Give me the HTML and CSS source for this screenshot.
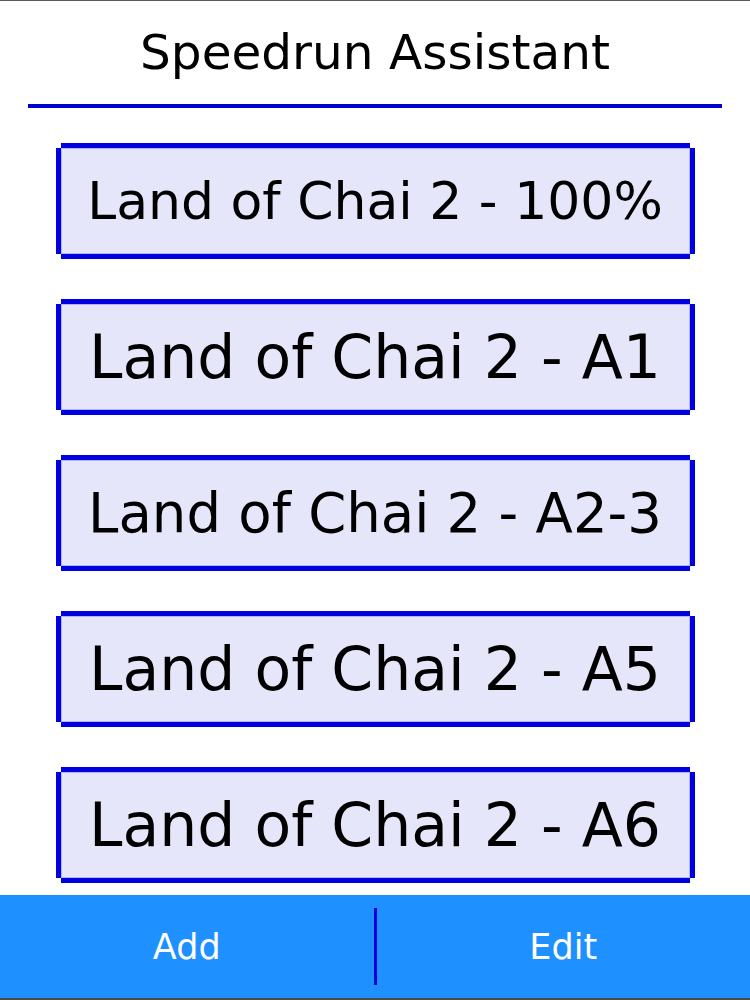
FILE: index.html
```html
<!DOCTYPE html>
<html>
<head>
    <title>Speedrun Assistant</title>
    <link rel="stylesheet" href="styles.css">
</head>
<body>
    <div class="app">
        <!-- Header -->
        <div class="header">
            <h1>Speedrun Assistant</h1>
            <div class="rule"></div>
        </div>

        <!-- Run list -->
        <div class="run-list">
            <button class="run run-long">Land of Chai 2 - 100%</button>
            <button class="run">Land of Chai 2 - A1</button>
            <button class="run run-mid">Land of Chai 2 - A2-3</button>
            <button class="run">Land of Chai 2 - A5</button>
            <button class="run">Land of Chai 2 - A6</button>
        </div>

        <!-- Bottom bar -->
        <div class="toolbar">
            <button class="tool">Add</button>
            <div class="divider"></div>
            <button class="tool">Edit</button>
        </div>
    </div>
</body>
</html>
```

FILE: styles.css
```css
body {
    margin: 0;
    font-family: "DejaVu Sans", Verdana, sans-serif;
    background: #fff;
    color: #000;
}

.app {
    height: 1000px;
    box-sizing: border-box;
    display: flex;
    flex-direction: column;
    border-top: 1px solid #5a5a5a;
    border-bottom: 2px solid #4a4a4a;
    overflow: hidden;
}

.header {
    padding: 0 28px;
}

h1 {
    margin: 0;
    padding-top: 27px;
    height: 103px;
    box-sizing: border-box;
    font-size: 48.5px;
    font-weight: normal;
    line-height: 1;
    text-align: center;
}

.rule {
    height: 4px;
    background: #0000cc;
}

.run-list {
    display: flex;
    flex-direction: column;
    align-items: center;
    gap: 50px;
    margin-top: 40px;
}

/* the blue edges sit outside the box and leave the corners open */
.run {
    width: 629px;
    height: 106px;
    padding: 0;
    margin: 0;
    border: 1px solid #b4b4f2;
    background: #e6e6fa;
    box-shadow: 0 -5px 0 #0000e0, 0 5px 0 #0000e0, -5px 0 0 #0000e0, 5px 0 0 #0000e0;
    font-family: "DejaVu Sans", Verdana, sans-serif;
    font-size: 60px;
    color: #000;
    text-align: center;
    white-space: nowrap;
    cursor: pointer;
}

.run-long {
    font-size: 52px;
}

.run-mid {
    font-size: 54.5px;
}

.toolbar {
    margin-top: auto;
    height: 103px;
    background: #1e90ff;
    display: grid;
    grid-template-columns: 1fr 3px 1fr;
    align-items: center;
}

.tool {
    height: 100%;
    background: none;
    border: none;
    color: #fff;
    font-family: "DejaVu Sans", Verdana, sans-serif;
    font-size: 35px;
    cursor: pointer;
}

.divider {
    height: 77px;
    background: #0000dd;
}
```
